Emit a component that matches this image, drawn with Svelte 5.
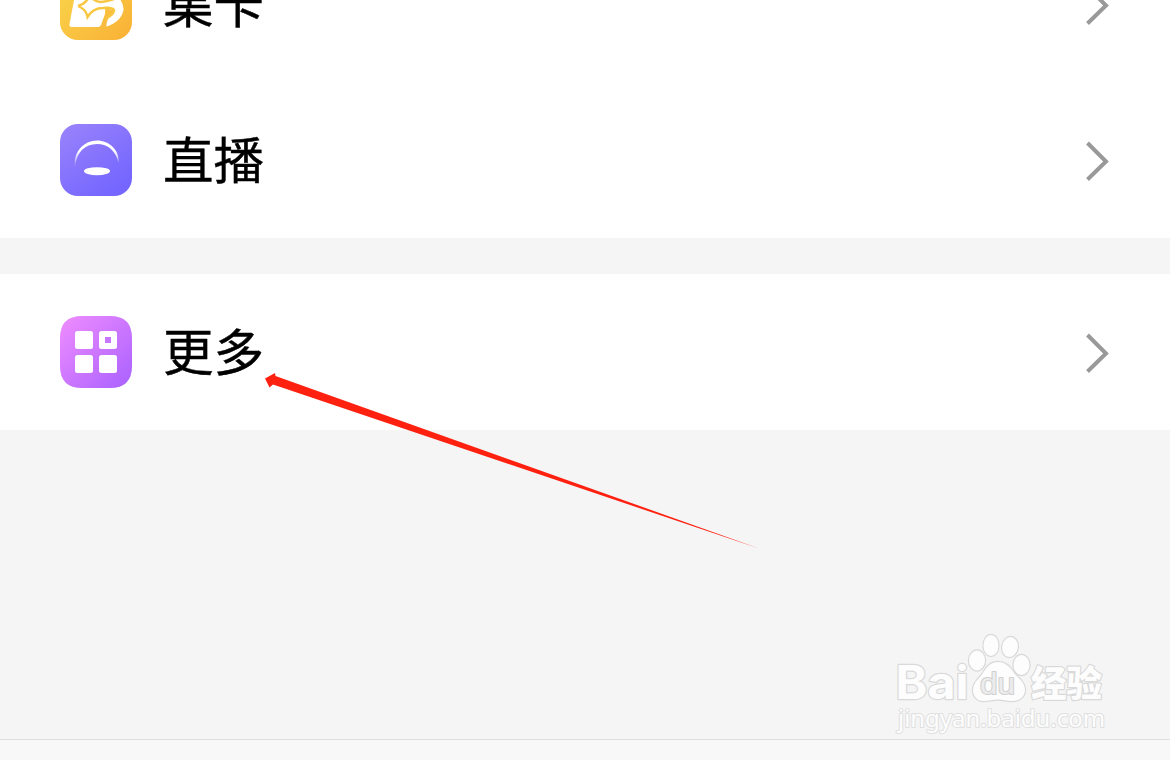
<script lang="ts">
    type Item = { label: string; icon: "cards" | "live" | "more" };

    const groups: Item[][] = [
        [
            { label: "集卡", icon: "cards" },
            { label: "直播", icon: "live" },
        ],
        [{ label: "更多", icon: "more" }],
    ];
</script>

<div class="screen">
    <main class="list">
        {#each groups as group}
            <section class="group">
                {#each group as item}
                    <div class="row">
                        <svg class="icon" viewBox="0 0 72 72">
                            {#if item.icon === "cards"}
                                <defs>
                                    <linearGradient id="cards" x1="0" y1="0" x2="1" y2="1">
                                        <stop offset="0" stop-color="#fad94e" />
                                        <stop offset="1" stop-color="#f9b035" />
                                    </linearGradient>
                                </defs>
                                <rect width="72" height="72" rx="18" fill="url(#cards)" />
                                <path
                                    d="M18 20H46L45 46L41 57Q40 59 38 59H11.5Q9 59 9.5 56L15 27Z"
                                    fill="#fff"
                                />
                                <path
                                    d="M44 29L58 29Q64 35 63.5 42Q61 54 46.500 58.5Q46 56 48 51Q53 47 54 42L44 40Z"
                                    fill="#fff"
                                />
                                <path
                                    d="M40 34Q52 33 58 29M18 38Q26 36 30 27Q33 33 40 34M18 38Q26 41 27.5 49Q33 40 43 40Q52 39 54 42Q54 47 46 50"
                                    fill="none"
                                    stroke="#f9c63f"
                                    stroke-width="2.4"
                                />
                            {:else if item.icon === "live"}
                                <defs>
                                    <linearGradient id="live" x1="0" y1="0" x2="0.7" y2="1">
                                        <stop offset="0" stop-color="#9a83fb" />
                                        <stop offset="1" stop-color="#7466ff" />
                                    </linearGradient>
                                    <linearGradient id="arc" x1="0" y1="0" x2="0" y2="1">
                                        <stop offset="0.4" stop-color="#fff" />
                                        <stop offset="1" stop-color="#fff" stop-opacity="0" />
                                    </linearGradient>
                                </defs>
                                <rect width="72" height="72" rx="18" fill="url(#live)" />
                                <path
                                    d="M15 44C12.5 28 24 16.5 37 16.5C49 16.5 60 26 58.5 39C56 27 48 20 37 20C25 20 16 28 15 44Z"
                                    fill="url(#arc)"
                                />
                                <ellipse cx="37" cy="47.2" rx="13" ry="4" fill="#fff" />
                            {:else}
                                <defs>
                                    <linearGradient id="more" x1="0" y1="0" x2="1" y2="1">
                                        <stop offset="0" stop-color="#f08dff" />
                                        <stop offset="1" stop-color="#a961ff" />
                                    </linearGradient>
                                </defs>
                                <path
                                    d="M0 22Q0 0 22 0H50Q72 0 72 22V50Q72 72 50 72H22Q0 72 0 50Z"
                                    fill="url(#more)"
                                />
                                <g fill="#fff">
                                    <rect x="15" y="15" width="18" height="18" rx="2.5" />
                                    <rect x="39" y="15" width="18" height="18" rx="2.5" />
                                    <rect x="15" y="39" width="18" height="18" rx="2.5" />
                                    <rect x="39" y="39" width="18" height="18" rx="2.5" />
                                </g>
                                <rect x="45" y="21" width="6" height="6" fill="#c878ff" />
                            {/if}
                        </svg>
                        <span class="label">{item.label}</span>
                        <svg class="chevron" viewBox="0 0 24 40">
                            <path d="M1.5 2L20 20.5L1.5 38.5" />
                        </svg>
                    </div>
                {/each}
            </section>
        {/each}
    </main>

    <footer class="tabbar"></footer>

    <svg class="arrow" viewBox="0 0 500 180">
        <path d="M5 8.5L15 3L15.5 6L499 178.5L13 14.5L9.5 17.5Z" />
    </svg>

    <svg class="watermark" viewBox="0 0 240 120">
        <g class="mark">
            <text class="brand" x="15.5" y="79" textLength="73" lengthAdjust="spacingAndGlyphs">Bai</text>
            <ellipse cx="97" cy="40.5" rx="8" ry="10" />
            <ellipse cx="111" cy="25.5" rx="7.5" ry="10.5" />
            <ellipse cx="130" cy="27" rx="7.8" ry="10" transform="rotate(10 130 27)" />
            <ellipse cx="141.5" cy="45" rx="8" ry="10" />
            <path
                d="M118 42C126 42 131 48 134 53C138 58 145 62 145 70C145 77 139 81 132 81C126 81 123 79.5 118 79.5C113 79.5 109 81 103 81C97 81 93 76 93 70C93 62 100 58 103 53C107 47 110 42 118 42Z"
            />
            <text class="du" x="100" y="74" textLength="35" lengthAdjust="spacingAndGlyphs">du</text>
            <text class="cjk" x="151" y="76.5" textLength="71" lengthAdjust="spacingAndGlyphs">经验</text>
            <text class="site" x="18" y="106.5" textLength="207" lengthAdjust="spacingAndGlyphs">jingyan.baidu.com</text>
        </g>
    </svg>
</div>

<style>
    :global(body) {
        margin: 0;
        background: #f5f5f5;
    }
    .screen {
        position: relative;
        display: flex;
        flex-direction: column;
        height: 760px;
        overflow: hidden;
        background: #f5f5f5;
        font-family: "Noto Sans CJK SC", sans-serif;
    }
    /* scrolled so that the first row is partly out of view */
    .list {
        flex: 1;
        display: flex;
        flex-direction: column;
        gap: 36px;
        margin-top: -74px;
    }
    .group {
        background: #fff;
    }
    .row {
        display: flex;
        align-items: center;
        height: 156px;
        padding: 0 60px;
        box-sizing: border-box;
    }
    .icon {
        width: 72px;
        height: 72px;
    }
    .label {
        flex: 1;
        margin: 0 0 6px 31px;
        font-size: 50.5px;
        line-height: 72px;
        color: #000;
        -webkit-text-stroke: 0.4px #000;
    }
    .chevron {
        width: 24px;
        height: 40px;
        margin-top: 2px;
    }
    .chevron path {
        fill: none;
        stroke: #999;
        stroke-width: 4;
    }
    .tabbar {
        height: 20px;
        border-top: 1px solid #dedede;
        background: #f8f8f8;
    }
    .arrow {
        position: absolute;
        left: 260px;
        top: 370px;
        width: 500px;
        height: 180px;
        fill: #ff2110;
    }
    .watermark {
        position: absolute;
        left: 880px;
        top: 620px;
        width: 240px;
        height: 120px;
    }
    .mark {
        fill: #fdfdfd;
        stroke: #d9d9d9;
        stroke-width: 2.4;
        stroke-linejoin: round;
        paint-order: stroke;
    }
    .brand {
        font-family: Inter, sans-serif;
        font-size: 46px;
        font-weight: 700;
    }
    .du {
        fill: #ececec;
        stroke: #d0d0d0;
        stroke-width: 2;
        font-family: "Liberation Sans", sans-serif;
        font-size: 29px;
    }
    .cjk {
        font-family: "Noto Sans CJK SC", sans-serif;
        font-size: 36px;
        font-weight: 900;
    }
    .site {
        font-family: "Noto Sans", sans-serif;
        font-size: 23px;
        stroke: #e0e0e0;
        stroke-width: 2;
    }
</style>
